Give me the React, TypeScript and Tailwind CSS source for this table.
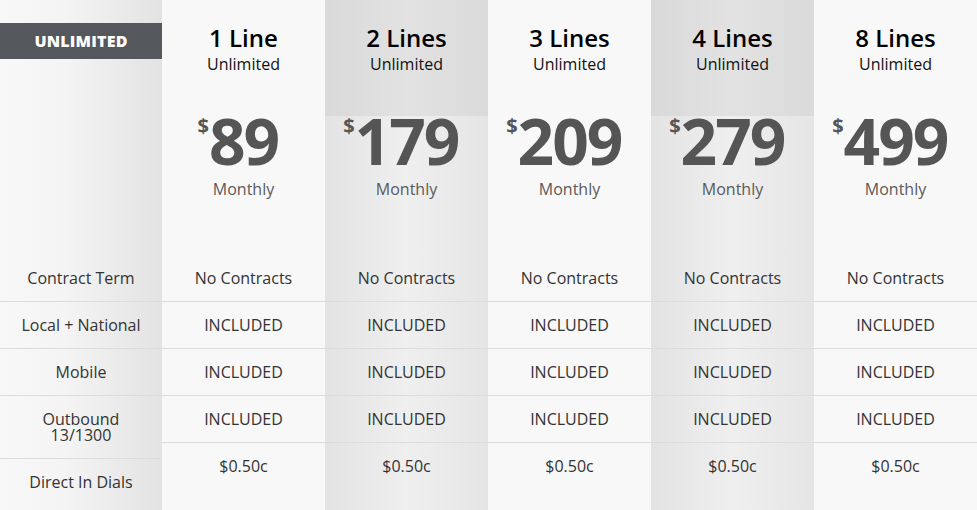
const plans = [
  { name: '1 Line', price: '89' },
  { name: '2 Lines', price: '179' },
  { name: '3 Lines', price: '209' },
  { name: '4 Lines', price: '279' },
  { name: '8 Lines', price: '499' },
]

const features = ['No Contracts', 'INCLUDED', 'INCLUDED', 'INCLUDED']

function LabelColumn() {
  return (
    <div className="flex w-[162px] shrink-0 flex-col bg-[linear-gradient(to_right,#f8f8f8_0%,#f4f4f4_40%,#e3e3e3_100%)]">
      <div className="h-[255px] pt-[23px]">
        <div className="flex h-[36px] items-center justify-center bg-[#54575c] text-[16px] font-extrabold tracking-[0.2px] text-white">
          UNLIMITED
        </div>
      </div>
      <div className="border-b border-[#dcdcdc] py-[13px] text-center leading-[20px]">Contract Term</div>
      <div className="border-b border-[#dcdcdc] py-[13px] text-center leading-[20px]">Local + National</div>
      <div className="border-b border-[#dcdcdc] py-[13px] text-center leading-[20px]">Mobile</div>
      <div className="border-b border-[#dcdcdc] py-[15px] text-center leading-[16px]">
        Outbound
        <br />
        13/1300
      </div>
      <div className="flex-1 pt-[13px] text-center leading-[20px]">Direct In Dials</div>
    </div>
  )
}

function PlanColumn({ name, price, shaded }: { name: string; price: string; shaded: boolean }) {
  return (
    <div
      className={`flex w-[163px] shrink-0 flex-col ${
        shaded ? 'bg-[linear-gradient(to_right,#e3e3e3_0%,#efefef_50%,#e5e5e5_100%)]' : 'bg-[#f8f8f8]'
      }`}
    >
      {/* Header */}
      <div
        className={`h-[116px] pt-[24px] text-center ${
          shaded ? 'bg-[linear-gradient(to_right,#d9d9d9_0%,#e2e2e2_50%,#dadada_100%)]' : ''
        }`}
      >
        <p className="text-[24px] font-semibold leading-[28px] text-black">{name}</p>
        <p className="mt-[2px] text-[16px] leading-[20px] text-[#111]">Unlimited</p>
      </div>

      {/* Price */}
      <div className="h-[139px] text-center text-[#555]">
        <div className="flex h-[50px] justify-center">
          <span className="relative text-[64px] font-bold leading-[50px] tracking-[-2px]">
            <span className="absolute top-0 right-full text-[20px] leading-[20px] tracking-normal">$</span>
            {price}
          </span>
        </div>
        <p className="mt-[13px] text-[16px] leading-[20px] text-[#5a5a5a]">Monthly</p>
      </div>

      {/* Features */}
      {features.map((f, i) => (
        <div key={i} className="border-b border-[#dcdcdc] py-[13px] text-center leading-[20px]">
          {f}
        </div>
      ))}
      <div className="flex-1 pt-[13px] text-center leading-[20px]">$0.50c</div>
    </div>
  )
}

export default function App() {
  return (
    <div className="flex h-[510px] w-[977px] overflow-hidden bg-[#f8f8f8] font-['Open_Sans',sans-serif] text-[16px] text-[#333]">
      <LabelColumn />
      {plans.map((p, i) => (
        <PlanColumn key={p.name} name={p.name} price={p.price} shaded={i % 2 === 1} />
      ))}
    </div>
  )
}
